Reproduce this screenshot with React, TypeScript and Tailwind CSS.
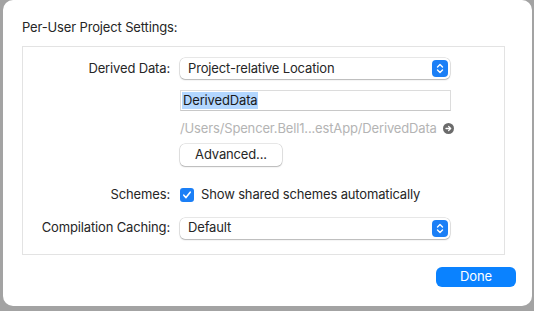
import React from 'react';

const font = { fontFamily: 'Inter, "Liberation Sans", sans-serif' };

function Stepper() {
  return (
    <span className="flex h-[17px] w-[16px] items-center justify-center rounded-[4px] bg-[#1b7ff6]">
      <svg width="8" height="11" viewBox="0 0 8 11" fill="none">
        <path d="M1.5 4 L4 1.5 L6.5 4" stroke="white" strokeWidth="1.4" strokeLinecap="round" strokeLinejoin="round" />
        <path d="M1.5 7 L4 9.5 L6.5 7" stroke="white" strokeWidth="1.4" strokeLinecap="round" strokeLinejoin="round" />
      </svg>
    </span>
  );
}

function Popup({ value }: { value: string }) {
  return (
    <div className="flex h-[21px] w-[270px] items-center justify-between rounded-[5px] bg-white pl-[8px] pr-[2px] text-[13px] text-[#262626] shadow-[0_0_0_0.5px_rgba(0,0,0,0.18),0_1px_1.5px_rgba(0,0,0,0.22)]">
      <span>{value}</span>
      <Stepper />
    </div>
  );
}

function Row({ label, children, className = '' }: { label: string; children: React.ReactNode; className?: string }) {
  return (
    <div className={`flex items-center ${className}`}>
      <div className="w-[147px] text-right text-[13px] text-[#262626]">{label}</div>
      <div className="ml-[10px] flex items-center">{children}</div>
    </div>
  );
}

export default function App() {
  return (
    <div className="flex h-[311px] w-[534px] bg-[#a3a3a3] pb-[5px] pl-[3px] pr-[2px] tracking-[-0.15px]" style={font}>
      <div className="flex flex-1 flex-col rounded-[10px] bg-white pl-[19px] pt-[19px]">
        <div className="text-[13px] leading-[16px] text-[#262626]">Per-User Project Settings:</div>
        <div className="mt-[11px] flex h-[209px] w-[483px] flex-col border border-[#e3e3e3] pt-[11px]">
          <Row label="Derived Data:">
            <Popup value="Project-relative Location" />
          </Row>
          <div className="ml-[157px] mt-[11px] flex h-[21px] w-[271px] items-center border border-[#dcdcdc] border-b-[#c8c8c8] bg-white pl-[1px]">
            <span className="bg-[#b3d7ff] px-[1px] text-[13px] leading-[17px] text-[#1a1a1a]">DerivedData</span>
          </div>
          <div className="ml-[157px] mt-[9px] flex items-center gap-[6px]">
            <span className="text-[13px] leading-[16px] text-[#b4b4b4]">/Users/Spencer.Bell1...estApp/DerivedData</span>
            <svg width="11" height="11" viewBox="0 0 11 11">
              <circle cx="5.5" cy="5.5" r="5.5" fill="#6b6b6b" />
              <path d="M3 5.5 H7.6 M5.6 3.4 L7.7 5.5 L5.6 7.6" stroke="white" strokeWidth="1.3" fill="none" strokeLinecap="round" strokeLinejoin="round" />
            </svg>
          </div>
          <div className="ml-[157px] mt-[8px] flex h-[22px] w-[102px] items-center justify-center rounded-[5px] bg-white text-[13px] text-[#262626] shadow-[0_0_0_0.5px_rgba(0,0,0,0.18),0_1px_1.5px_rgba(0,0,0,0.22)]">
            Advanced...
          </div>
          <Row label="Schemes:" className="mt-[19px]">
            <span className="flex h-[14px] w-[14px] items-center justify-center rounded-[3px] bg-[#1b7ff6]">
              <svg width="10" height="10" viewBox="0 0 10 10" fill="none">
                <path d="M1.8 5.2 L4 7.6 L8.2 2.2" stroke="white" strokeWidth="1.6" strokeLinecap="round" strokeLinejoin="round" />
              </svg>
            </span>
            <span className="ml-[7px] text-[13px] text-[#262626]">Show shared schemes automatically</span>
          </Row>
          <Row label="Compilation Caching:" className="mt-[13px]">
            <Popup value="Default" />
          </Row>
        </div>
        <div className="mt-[12px] flex w-[494px] justify-end">
          <div className="flex h-[20px] w-[80px] items-center justify-center rounded-[6px] bg-[#0a82ff] text-[13px] text-white">
            Done
          </div>
        </div>
      </div>
    </div>
  );
}
